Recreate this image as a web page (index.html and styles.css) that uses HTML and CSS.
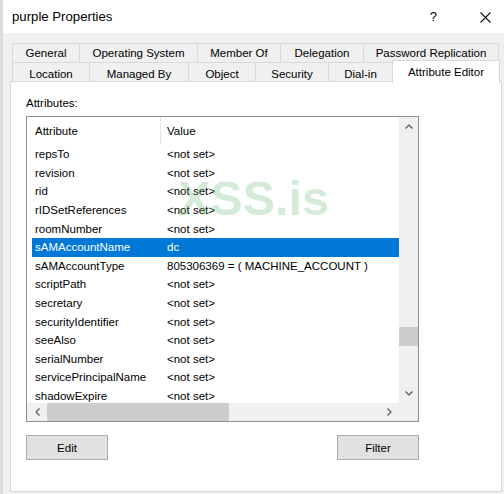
FILE: index.html
```html
<!DOCTYPE html>
<html>
<head>
<meta charset="utf-8">
<link rel="stylesheet" href="styles.css">
</head>
<body>
<div class="window">
  <div class="titlebar">
    <span class="title">purple Properties</span>
    <span class="help">?</span>
    <svg class="close" width="11" height="11" viewBox="0 0 11 11"><path d="M0.5 0.5 L10.5 10.5 M10.5 0.5 L0.5 10.5" stroke="#111" stroke-width="1.1" fill="none"/></svg>
  </div>
  <div class="body">
    <div class="tabs">
      <div class="tabrow row1">
        <div class="tab">General</div>
        <div class="tab">Operating System</div>
        <div class="tab">Member Of</div>
        <div class="tab">Delegation</div>
        <div class="tab last">Password Replication</div>
      </div>
      <div class="tabrow row2">
        <div class="tab">Location</div>
        <div class="tab">Managed By</div>
        <div class="tab">Object</div>
        <div class="tab">Security</div>
        <div class="tab">Dial-in</div>
        <div class="tab selected">Attribute Editor</div>
      </div>
    </div>
    <div class="panel">
      <div class="label">Attributes:</div>
      <div class="listbox">
        <div class="listarea">
          <div class="list">
            <div class="header">
              <div class="hcol first">Attribute</div>
              <div class="hcol">Value</div>
            </div>
            <div class="row"><span class="c1">repsTo</span><span>&lt;not set&gt;</span></div>
            <div class="row"><span class="c1">revision</span><span>&lt;not set&gt;</span></div>
            <div class="row"><span class="c1">rid</span><span>&lt;not set&gt;</span></div>
            <div class="row"><span class="c1">rIDSetReferences</span><span>&lt;not set&gt;</span></div>
            <div class="row"><span class="c1">roomNumber</span><span>&lt;not set&gt;</span></div>
            <div class="row sel"><span class="c1">sAMAccountName</span><span>dc</span></div>
            <div class="row"><span class="c1">sAMAccountType</span><span>805306369 = ( MACHINE_ACCOUNT )</span></div>
            <div class="row"><span class="c1">scriptPath</span><span>&lt;not set&gt;</span></div>
            <div class="row"><span class="c1">secretary</span><span>&lt;not set&gt;</span></div>
            <div class="row"><span class="c1">securityIdentifier</span><span>&lt;not set&gt;</span></div>
            <div class="row"><span class="c1">seeAlso</span><span>&lt;not set&gt;</span></div>
            <div class="row"><span class="c1">serialNumber</span><span>&lt;not set&gt;</span></div>
            <div class="row"><span class="c1">servicePrincipalName</span><span>&lt;not set&gt;</span></div>
            <div class="row"><span class="c1">shadowExpire</span><span>&lt;not set&gt;</span></div>
            <div class="watermark">XSS.is</div>
          </div>
          <div class="vscroll">
            <div class="sbtn vbtn"><svg width="8" height="5" viewBox="0 0 8 5"><path d="M0.5 4.5 L4 1 L7.5 4.5" stroke="#555" stroke-width="1.2" fill="none"/></svg></div>
            <div class="vtrack"><div class="vthumb"></div></div>
            <div class="sbtn vbtn"><svg width="8" height="5" viewBox="0 0 8 5"><path d="M0.5 0.5 L4 4 L7.5 0.5" stroke="#555" stroke-width="1.2" fill="none"/></svg></div>
          </div>
        </div>
        <div class="bottombar">
          <div class="hscroll">
            <div class="sbtn hbtn"><svg width="5" height="8" viewBox="0 0 5 8"><path d="M4.5 0.5 L1 4 L4.5 7.5" stroke="#555" stroke-width="1.2" fill="none"/></svg></div>
            <div class="htrack"><div class="hthumb"></div></div>
            <div class="sbtn hbtn"><svg width="5" height="8" viewBox="0 0 5 8"><path d="M0.5 0.5 L4 4 L0.5 7.5" stroke="#555" stroke-width="1.2" fill="none"/></svg></div>
          </div>
          <div class="corner"></div>
        </div>
      </div>
      <div class="buttons">
        <div class="btn">Edit</div>
        <div class="btn">Filter</div>
      </div>
    </div>
  </div>
</div>
</body>
</html>
```
FILE: styles.css
```css
* { box-sizing: border-box; }
html, body { margin: 0; padding: 0; }
body {
  width: 504px;
  height: 494px;
  overflow: hidden;
  font-family: "Liberation Sans", Arial, sans-serif;
  font-size: 11.5px;
  color: #000;
  background: #f0f0f0;
}
.window {
  width: 504px;
  height: 494px;
  display: flex;
  flex-direction: column;
  border-left: 3px solid #dcdcdc;
}
.titlebar {
  height: 33px;
  flex: none;
  background: #fff;
  display: flex;
  align-items: center;
  padding-left: 9px;
}
.title {
  font-size: 13.2px;
  flex: 1;
}
.help {
  font-size: 13px;
  margin-right: 43px;
}
.close {
  margin-right: 13px;
  margin-top: 1px;
}
.body {
  flex: 1;
  display: flex;
  flex-direction: column;
  padding: 10px 2px 2px 7px;
}
.tabs {
  margin-left: 2px;
  display: flex;
  flex-direction: column;
}
.tabrow {
  display: grid;
}
.row1 {
  grid-template-columns: 67px 118px 83px 83px 136px;
  height: 19px;
}
.row2 {
  grid-template-columns: 77px 99px 67px 73px 64px 108px;
  height: 20px;
  margin-bottom: -1px;
}
.tab {
  border-top: 1px solid #d9d9d9;
  border-left: 1px solid #d9d9d9;
  display: flex;
  align-items: center;
  justify-content: center;
  white-space: nowrap;
  background: #f0f0f0;
}
.tab.last { border-right: 1px solid #d9d9d9; }
.row2 .tab { padding-top: 1px; }
.tab.selected {
  background: #fff;
  border-right: 1px solid #d9d9d9;
  margin-top: -2px;
  height: 23px;
  position: relative;
  z-index: 1;
  padding-top: 0;
  padding-bottom: 1px;
}
.panel {
  flex: 1;
  background: #fff;
  border: 1px solid #d9d9d9;
  padding: 14px 0 0 15px;
  display: flex;
  flex-direction: column;
}
.label {
  height: 14px;
  line-height: 14px;
  margin-bottom: 6px;
}
.listbox {
  width: 393px;
  height: 306px;
  border: 1px solid #8f8f8f;
  display: flex;
  flex-direction: column;
}
.listarea {
  height: 286px;
  display: flex;
}
.list {
  flex: 1;
  overflow: hidden;
  position: relative;
  background: #fff;
}
.header {
  height: 28px;
  display: flex;
  align-items: stretch;
}
.hcol {
  display: flex;
  align-items: center;
  padding-left: 6px;
}
.hcol.first {
  width: 134px;
  padding-left: 8px;
  border-right: 1px solid #e5e5e5;
}
.row {
  height: 18.6px;
  margin-left: 5px;
  display: grid;
  grid-template-columns: 135px 1fr;
  align-items: center;
  white-space: nowrap;
}
.row .c1 { padding-left: 3px; }
.row.sel {
  background: #0078d7;
  color: #fff;
}
.watermark {
  position: absolute;
  left: 151px;
  top: 57px;
  font-size: 48.5px;
  line-height: 49px;
  font-weight: bold;
  color: rgba(90, 180, 100, 0.26);
  pointer-events: none;
  white-space: nowrap;
}
.vscroll {
  width: 19px;
  background: #f0f0f0;
  display: flex;
  flex-direction: column;
}
.sbtn {
  display: flex;
  align-items: center;
  justify-content: center;
}
.vbtn { height: 19px; }
.vtrack { flex: 1; }
.vthumb {
  margin-top: 191px;
  height: 19px;
  background: #cdcdcd;
}
.bottombar {
  flex: 1;
  display: flex;
}
.hscroll {
  flex: 1;
  display: flex;
  background: #f0f0f0;
}
.hbtn { width: 20px; }
.htrack { flex: 1; }
.hthumb {
  width: 182px;
  height: 100%;
  background: #cdcdcd;
}
.corner {
  width: 19px;
  background: #f0f0f0;
}
.buttons {
  width: 393px;
  margin-top: 13px;
  display: flex;
  justify-content: space-between;
}
.btn {
  width: 82px;
  height: 25px;
  background: #e1e1e1;
  border: 1px solid #adadad;
  display: flex;
  align-items: center;
  justify-content: center;
}
```
